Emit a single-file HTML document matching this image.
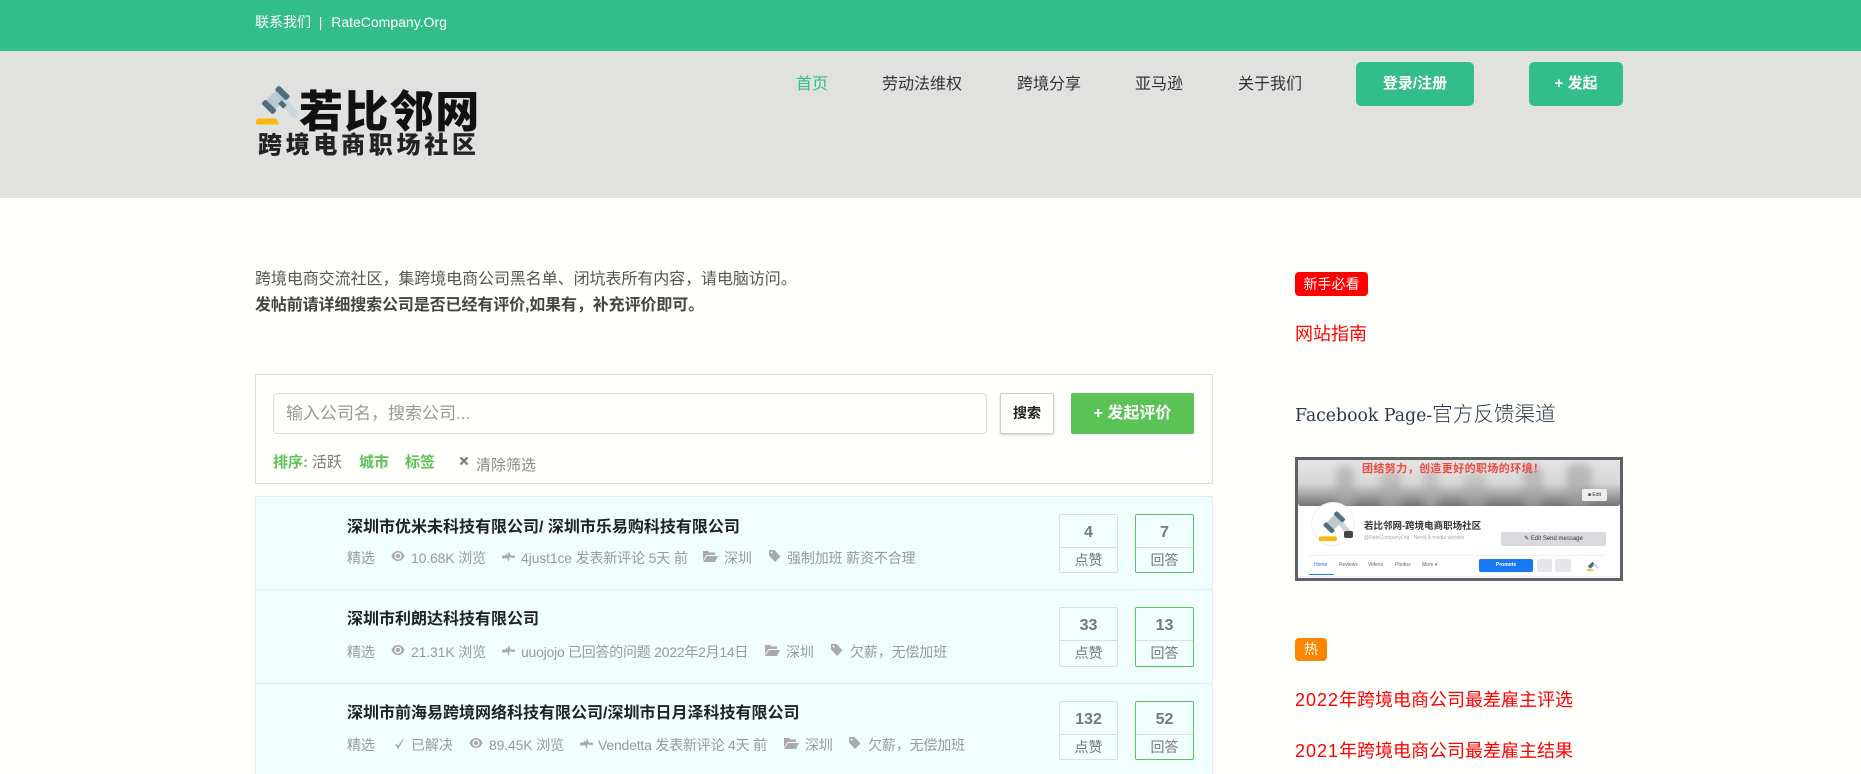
<!DOCTYPE html>
<html lang="zh"><head><meta charset="utf-8"><title>若比邻网</title>
<style>
*{box-sizing:border-box}
html,body{margin:0;padding:0;width:1861px;height:774px;overflow:hidden;background:#fffffc}
body{font-family:"Liberation Sans","Noto Sans CJK SC",sans-serif;position:relative;color:#555}
.a{position:absolute}
.t{position:absolute;white-space:nowrap;line-height:20px;height:20px;margin-top:1px}
.nav{font-size:16px;color:#333;top:74px}
.btn{position:absolute;background:#33bd8a;border-radius:5px;color:#fff;font-weight:bold;font-size:15px;text-align:center;top:62px;height:44px;line-height:44px}
.row{position:absolute;left:255px;width:958px;background:#f0feff;border:1px solid #e3eeef;border-top:0}
.title{font-size:16px;font-weight:bold;color:#222;left:347px}
.m{font-size:14px;color:#999;letter-spacing:-.15px}
.ic{position:absolute}
.box{position:absolute;width:59px;border:1px solid #ddd;border-radius:2px;text-align:center;color:#777}
.box.g{left:1135px;border-color:#5bc355}
.box.l{left:1059px}
.box b{display:block;font-size:16px;line-height:36px;height:33px;border-bottom:1px solid #ddd}
.box span{display:block;font-size:14px;line-height:24px}
.s{position:absolute;white-space:nowrap}
</style></head><body>
<div class="a" style="left:0;top:0;width:1861px;height:51px;background:#33bd8a"></div>
<div class="a" style="left:0;top:51px;width:1861px;height:147px;background:#e1e1e0"></div>
<div class="t" style="left:255px;top:11px;color:#fff;font-size:14px">联系我们 &nbsp;|&nbsp; <span style="margin-left:1px">RateCompany.Org</span></div>

<svg class="a" style="left:255px;top:84px" width="46" height="44" viewBox="0 0 46 44">
<path d="M3 34.500H19Q21 34.500 22 36L24 39.500Q24 40.500 22 40.500H3Q1 40.500 1 38.500Q1 35 3 34.500Z" fill="#f9b90f"/>
<path d="M24 16 L29 12 L43 28 Q44 32 41 34 Q38 35 36 32 Z" fill="#c9d8dd"/>
<rect x="11" y="9.500" width="19.500" height="13" transform="rotate(-44 20.700 16)" fill="#b9c9cf"/>
<rect x="6" y="20" width="16" height="6" rx="2" transform="rotate(44 14 23)" fill="#4f6f80"/>
<rect x="19.500" y="6" width="16" height="6" rx="2" transform="rotate(44 27.500 9)" fill="#4f6f80"/>
<rect x="24" y="18" width="7" height="5" transform="rotate(44 27.500 20.500)" fill="#4f6f80"/>
</svg>
<div class="s" style="left:299px;top:80px;font-size:44px;line-height:56px;letter-spacing:1.4px;font-weight:900;color:#111;font-family:'Noto Sans CJK SC',sans-serif">若比邻网</div>
<div class="s" style="left:258px;top:126px;font-size:24px;line-height:34px;letter-spacing:3.7px;font-weight:900;color:#222;font-family:'Noto Sans CJK SC',sans-serif">跨境电商职场社区</div>

<div class="t nav" style="left:796px;color:#33bd8a">首页</div>
<div class="t nav" style="left:882px">劳动法维权</div>
<div class="t nav" style="left:1017px">跨境分享</div>
<div class="t nav" style="left:1135px">亚马逊</div>
<div class="t nav" style="left:1238px">关于我们</div>
<div class="btn" style="left:1356px;width:118px">登录/注册</div>
<div class="btn" style="left:1529px;width:94px">+ 发起</div>

<div class="t" style="left:255px;top:269px;font-size:16px;color:#555;letter-spacing:-.07px">跨境电商交流社区，集跨境电商公司黑名单、闭坑表所有内容，请电脑访问。</div>
<div class="t" style="left:255px;top:295px;font-size:16px;font-weight:bold;color:#444;letter-spacing:-.12px">发帖前请详细搜索公司是否已经有评价,如果有，补充评价即可。</div>

<div class="a" style="left:255px;top:374px;width:958px;height:110px;border:1px solid #ddd"></div>
<div class="a" style="left:273px;top:393px;width:714px;height:41px;border:1px solid #ddd;border-radius:4px"></div>
<div class="t" style="left:286px;top:403px;font-size:17px;color:#999">输入公司名，搜索公司...</div>
<div class="a" style="left:1000px;top:393px;width:54px;height:41px;border:1px solid #ccc;border-radius:2px;box-shadow:0 1px 2px rgba(0,0,0,.2);font-size:14px;font-weight:bold;color:#222;text-align:center;line-height:39px">搜索</div>
<div class="a" style="left:1071px;top:393px;width:123px;height:41px;background:#5bc355;border-radius:2px;font-size:16px;font-weight:bold;color:#fff;text-align:center;line-height:41px">+ 发起评价</div>
<div class="t" style="left:273px;top:452px;font-size:15px;color:#5bc355;font-weight:bold">排序:</div>
<div class="t" style="left:312px;top:452px;font-size:15px;color:#777">活跃</div>
<div class="t" style="left:359px;top:452px;font-size:15px;color:#5bc355;font-weight:bold">城市</div>
<div class="t" style="left:405px;top:452px;font-size:15px;color:#5bc355;font-weight:bold">标签</div>
<svg class="a" style="left:459px;top:456px" width="10" height="10" viewBox="0 0 10 10"><path d="M1.500 1.500 L8.500 8.500 M8.500 1.500 L1.500 8.500" stroke="#777" stroke-width="2"/></svg>
<div class="t" style="left:476px;top:455px;font-size:15px;color:#888">清除筛选</div>

<div class="row" style="top:496px;height:94px;border-top:1px solid #e3eeef"></div>
<div class="row" style="top:590px;height:94px"></div>
<div class="row" style="top:684px;height:100px"></div>

<svg width="0" height="0" style="position:absolute"><defs>
<symbol id="eye" viewBox="0 0 14 12"><path fill-rule="evenodd" d="M7 1C3.500 1 1 4 .5 6 1 8 3.500 11 7 11s6-3 6.500-5C13 4 10.500 1 7 1zm0 1.500a3.500 3.500 0 1 0 0 7 3.500 3.500 0 0 0 0-7z" fill="#aaa"/><circle cx="7" cy="6" r="2.200" fill="#aaa"/></symbol>
<symbol id="pulse" viewBox="0 0 14 12"><path d="M0 5h3.500L5 2.500 6 5l1.500-5L9.500 5H14v2.500H9.500L8.500 6 7 12 5.500 7.500 4.500 8H0z" fill="#aaa"/></symbol>
<symbol id="folder" viewBox="0 0 15 12"><path d="M0 1h5l1.500 1.500H12V5H3.500L0 10.500zM4 6h11l-3 6H0z" fill="#aaa"/></symbol>
<symbol id="tag" viewBox="0 0 13 14"><path d="M1 1h5.500L12.500 7.500 7 13 1 6.500z" fill="#aaa"/><circle cx="3.600" cy="3.600" r="1" fill="#f0feff"/></symbol>
<symbol id="chk" viewBox="0 0 12 12"><path d="M1.500 6.500 4.500 11 10.500 .5 4.800 7.500z" fill="#aaa" stroke="#aaa" stroke-width=".6"/></symbol>
</defs></svg>

<div class="t title" style="top:517px">深圳市优米未科技有限公司/ 深圳市乐易购科技有限公司</div>
<div class="t m" style="left:347px;top:547px">精选</div>
<svg class="ic" style="left:391px;top:550px" width="14" height="12"><use href="#eye"/></svg>
<div class="t m" style="left:411px;top:547px">10.68K 浏览</div>
<svg class="ic" style="left:502px;top:551px" width="13" height="11"><use href="#pulse"/></svg>
<div class="t m" style="left:521px;top:547px">4just1ce 发表新评论 5天 前</div>
<svg class="ic" style="left:703px;top:550px" width="15" height="12"><use href="#folder"/></svg>
<div class="t m" style="left:724px;top:547px">深圳</div>
<svg class="ic" style="left:768px;top:549px" width="13" height="14"><use href="#tag"/></svg>
<div class="t m" style="left:787px;top:547px">强制加班 薪资不合理</div>
<div class="box l" style="top:514px;height:59px"><b>4</b><span>点赞</span></div>
<div class="box g" style="top:514px;height:59px"><b>7</b><span>回答</span></div>

<div class="t title" style="top:609px">深圳市利朗达科技有限公司</div>
<div class="t m" style="left:347px;top:641px">精选</div>
<svg class="ic" style="left:391px;top:644px" width="14" height="12"><use href="#eye"/></svg>
<div class="t m" style="left:411px;top:641px">21.31K 浏览</div>
<svg class="ic" style="left:502px;top:645px" width="13" height="11"><use href="#pulse"/></svg>
<div class="t m" style="left:521px;top:641px;letter-spacing:-.25px">uuojojo 已回答的问题 2022年2月14日</div>
<svg class="ic" style="left:765px;top:644px" width="15" height="12"><use href="#folder"/></svg>
<div class="t m" style="left:786px;top:641px">深圳</div>
<svg class="ic" style="left:830px;top:643px" width="13" height="14"><use href="#tag"/></svg>
<div class="t m" style="left:850px;top:641px">欠薪，无偿加班</div>
<div class="box l" style="top:607px;height:60px"><b>33</b><span>点赞</span></div>
<div class="box g" style="top:607px;height:60px"><b>13</b><span>回答</span></div>

<div class="t title" style="top:703px">深圳市前海易跨境网络科技有限公司/深圳市日月泽科技有限公司</div>
<div class="t m" style="left:347px;top:734px">精选</div>
<svg class="ic" style="left:394px;top:738px" width="11" height="12"><use href="#chk"/></svg>
<div class="t m" style="left:411px;top:734px">已解决</div>
<svg class="ic" style="left:469px;top:737px" width="14" height="12"><use href="#eye"/></svg>
<div class="t m" style="left:489px;top:734px">89.45K 浏览</div>
<svg class="ic" style="left:580px;top:738px" width="13" height="11"><use href="#pulse"/></svg>
<div class="t m" style="left:598px;top:734px;letter-spacing:-.2px">Vendetta 发表新评论 4天 前</div>
<svg class="ic" style="left:784px;top:737px" width="15" height="12"><use href="#folder"/></svg>
<div class="t m" style="left:805px;top:734px">深圳</div>
<svg class="ic" style="left:848px;top:736px" width="13" height="14"><use href="#tag"/></svg>
<div class="t m" style="left:868px;top:734px">欠薪，无偿加班</div>
<div class="box l" style="top:701px;height:59px"><b>132</b><span>点赞</span></div>
<div class="box g" style="top:701px;height:59px"><b>52</b><span>回答</span></div>

<div class="a" style="left:1295px;top:272px;width:73px;height:24px;background:#f00;border-radius:4px;color:#fff;font-size:14px;text-align:center;line-height:24px">新手必看</div>
<div class="t" style="left:1295px;top:323px;font-size:18px;color:#f00">网站指南</div>
<div class="t" style="left:1295px;top:401px;font-size:17.300px;color:#2b3a4a;font-family:'DejaVu Serif','Noto Sans CJK SC',serif">Facebook Page-<span style="font-family:'Noto Sans CJK SC',sans-serif;font-size:20.600px;font-weight:300">官方反馈渠道</span></div>

<div class="a" style="left:1295px;top:457px;width:328px;height:124px;border:3px solid #5f6265;background:#fff;overflow:hidden">
  <div class="a" style="left:0;top:0;width:322px;height:46px;background:linear-gradient(#e4e4e4 0,#d8d8d8 50%,#737373 100%);border-radius:0 0 3px 3px;overflow:hidden">
    <div class="a" style="left:38px;top:6px;width:18px;height:44px;background:#a9a9a9;border-radius:9px;filter:blur(4px);opacity:.7"></div>
    <div class="a" style="left:82px;top:12px;width:22px;height:40px;background:#aaa;border-radius:9px;filter:blur(4px);opacity:.6"></div>
    <div class="a" style="left:125px;top:10px;width:16px;height:40px;background:#b0b0b0;border-radius:9px;filter:blur(4px);opacity:.6"></div>
    <div class="a" style="left:165px;top:14px;width:24px;height:36px;background:#aaa;border-radius:9px;filter:blur(4px);opacity:.5"></div>
    <div class="a" style="left:225px;top:6px;width:20px;height:44px;background:#a5a5a5;border-radius:9px;filter:blur(4px);opacity:.6"></div>
    <div class="a" style="left:268px;top:4px;width:26px;height:44px;background:#a0a0a0;border-radius:9px;filter:blur(4px);opacity:.6"></div>
  </div>
  <div class="s" style="left:64px;top:2px;font-size:11px;line-height:14px;font-weight:bold;color:#f0493f;letter-spacing:.4px">团结努力，创造更好的职场的环境！</div>
  <div class="s" style="left:284px;top:29px;width:25px;height:12px;background:#eee;border-radius:2px;font-size:5px;line-height:12px;text-align:center;color:#333">■ Edit</div>
  <div class="a" style="left:13px;top:42px;width:44px;height:44px;border-radius:50%;background:#fff;border:1px solid #eee"></div>
  <svg class="a" style="left:20px;top:48px" width="36" height="38" viewBox="0 0 46 44">
    <rect x="1" y="34" width="23" height="6" rx="2" fill="#f9b90f"/>
    <path d="M24 16 L29 12 L43 28 Q44 32 41 34 Q38 35 36 32 Z" fill="#c9d8dd"/>
    <rect x="11" y="9.500" width="19.500" height="13" transform="rotate(-44 20.700 16)" fill="#b9c9cf"/>
    <rect x="6" y="20" width="16" height="6" rx="2" transform="rotate(44 14 23)" fill="#4f6f80"/>
    <rect x="19.500" y="6" width="16" height="6" rx="2" transform="rotate(44 27.500 9)" fill="#4f6f80"/>
  </svg>
  <div class="a" style="left:46px;top:71px;width:9px;height:7px;background:#444;border-radius:2px"></div>
  <div class="s" style="left:66px;top:61px;font-size:9.500px;line-height:12px;font-weight:bold;color:#333">若比邻网-跨境电商职场社区</div>
  <div class="s" style="left:66px;top:75px;font-size:5px;line-height:7px;color:#aaa">@RateCompanyOrg · News &amp; media website</div>
  <div class="s" style="left:203px;top:72px;width:105px;height:14px;background:#d8dadf;border-radius:2px;font-size:6px;line-height:14px;text-align:center;color:#333">✎ Edit Send message</div>
  <div class="a" style="left:11px;top:95px;width:297px;height:1px;background:#eee"></div>
  <div class="s" style="left:16px;top:102px;font-size:5px;line-height:7px;color:#1877f2">Home</div>
  <div class="s" style="left:41px;top:102px;font-size:5px;line-height:7px;color:#666">Reviews</div>
  <div class="s" style="left:70px;top:102px;font-size:5px;line-height:7px;color:#666">Videos</div>
  <div class="s" style="left:97px;top:102px;font-size:5px;line-height:7px;color:#666">Photos</div>
  <div class="s" style="left:124px;top:102px;font-size:5px;line-height:7px;color:#666">More ▾</div>
  <div class="a" style="left:11px;top:114px;width:25px;height:1px;background:#1877f2"></div>
  <div class="s" style="left:181px;top:99px;width:54px;height:13px;background:#1877f2;border-radius:2px;font-size:5px;line-height:13px;text-align:center;color:#fff;font-weight:bold">Promote</div>
  <div class="a" style="left:239px;top:99px;width:15px;height:13px;background:#e4e6eb;border-radius:2px"></div>
  <div class="a" style="left:257px;top:99px;width:16px;height:13px;background:#e4e6eb;border-radius:2px"></div>
  <svg class="a" style="left:288px;top:100px" width="14" height="12" viewBox="0 0 46 44">
    <rect x="1" y="34" width="23" height="6" fill="#f9b90f"/>
    <rect x="5" y="13" width="24" height="13" transform="rotate(-42 17 19)" fill="#4f6f80"/>
    <path d="M22 17 L30 11 L44 27 L38 31 Z" fill="#c9d8dd"/>
  </svg>
  <div class="a" style="left:0;top:116px;width:322px;height:2px;background:#f0f2f5"></div>
</div>

<div class="a" style="left:1295px;top:638px;width:32px;height:23px;background:#ff8400;border-radius:4px;color:#fff;font-size:14px;text-align:center;line-height:23px">热</div>
<div class="t" style="left:1295px;top:689px;font-size:18px;color:#f00"><span style="letter-spacing:1px">2022</span>年跨境电商公司最差雇主评选</div>
<div class="t" style="left:1295px;top:740px;font-size:18px;color:#f00"><span style="letter-spacing:1px">2021</span>年跨境电商公司最差雇主结果</div>
</body></html>
